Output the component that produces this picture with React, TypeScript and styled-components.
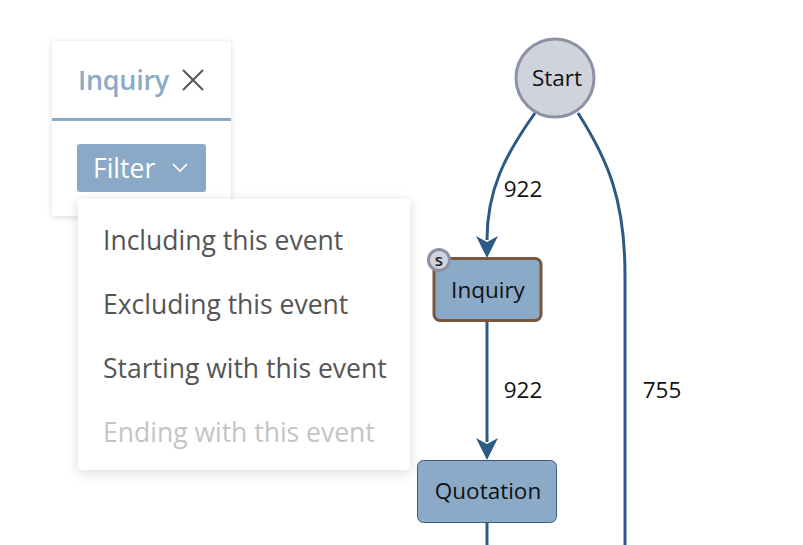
import styled, { createGlobalStyle } from 'styled-components'

const GlobalStyle = createGlobalStyle`
  html, body {
    margin: 0;
    padding: 0;
    background: #fff;
  }
  body {
    font-family: "Open Sans", "Noto Sans", sans-serif;
  }
`

const menuItems = [
  { label: 'Including this event', disabled: false },
  { label: 'Excluding this event', disabled: false },
  { label: 'Starting with this event', disabled: false },
  { label: 'Ending with this event', disabled: true }
]

function ProcessGraph () {
  const edge = '#2c5a85'
  return (
    <GraphSvg width="803" height="545" viewBox="0 0 803 545">
      <g fill="none" stroke={edge} strokeWidth="3">
        <path d="M535 113 C505 155 487 190 487 240" />
        <path d="M487 321 L487 442" />
        <path d="M578 113 C608 160 625 200 625 275 L625 545" />
        <path d="M487 523 L487 545" />
      </g>
      <path d="M476 236 L487 242 L498 236 L487 258 Z" fill={edge} />
      <path d="M476 438 L487 444 L498 438 L487 460 Z" fill={edge} />

      <circle cx="555" cy="78" r="39" fill="#d0d3dc" stroke="#8e90a5" strokeWidth="3" />
      <GraphText x="557" y="86" textAnchor="middle">Start</GraphText>

      <rect x="434" y="258.5" width="107" height="62" rx="6" fill="#8aaac8" stroke="#7a5738" strokeWidth="3" />
      <GraphText x="488" y="298" textAnchor="middle">Inquiry</GraphText>
      <circle cx="439" cy="260" r="10.5" fill="#d0d3dc" stroke="#8e90a5" strokeWidth="3" />
      <BadgeText x="439" y="266" textAnchor="middle">s</BadgeText>

      <rect x="417.5" y="460.5" width="139" height="62" rx="6" fill="#8aaac8" stroke="#3d5a7a" strokeWidth="1" />
      <GraphText x="488" y="499" textAnchor="middle">Quotation</GraphText>

      <GraphText x="523" y="197" textAnchor="middle">922</GraphText>
      <GraphText x="523" y="398" textAnchor="middle">922</GraphText>
      <GraphText x="662" y="398" textAnchor="middle">755</GraphText>
    </GraphSvg>
  )
}

function App () {
  return (
    <Page>
      <GlobalStyle />
      <ProcessGraph />
      <Card>
        <CardHeader>
          <Title>Inquiry</Title>
          <CloseButton aria-label="close">
            <svg width="24" height="24" viewBox="0 0 24 24">
              <path d="M2 2 L22 22 M22 2 L2 22" stroke="#555" strokeWidth="2" fill="none" />
            </svg>
          </CloseButton>
        </CardHeader>
        <CardBody>
          <FilterButton>
            Filter
            <svg width="16" height="10" viewBox="0 0 16 10">
              <path d="M1 1 L8 8 L15 1" stroke="#fff" strokeWidth="1.6" fill="none" />
            </svg>
          </FilterButton>
        </CardBody>
      </Card>
      <Menu>
        {menuItems.map(item => (
          <MenuItem key={item.label} $disabled={item.disabled}>{item.label}</MenuItem>
        ))}
      </Menu>
    </Page>
  )
}

const Page = styled.div`
  position: relative;
  width: 803px;
  height: 545px;
  overflow: hidden;
  background: #fff;
`
const GraphSvg = styled.svg`
  position: absolute;
  left: 0;
  top: 0;
`
const GraphText = styled.text`
  font-family: "Open Sans", "Noto Sans", sans-serif;
  font-size: 22.5px;
  fill: #111;
`
const BadgeText = styled.text`
  font-family: "Open Sans", "Noto Sans", sans-serif;
  font-size: 17px;
  font-weight: 600;
  fill: #222;
`
const Card = styled.div`
  position: absolute;
  left: 52px;
  top: 41px;
  width: 179px;
  height: 175px;
  background: #fff;
  border-radius: 3px;
  box-shadow: 0 1px 6px rgba(0, 0, 0, 0.15);
  display: flex;
  flex-direction: column;
`
const CardHeader = styled.div`
  height: 77px;
  display: flex;
  align-items: center;
  gap: 12px;
  padding: 0 26px;
  border-bottom: 3px solid #8aaac8;
`
const Title = styled.span`
  font-size: 27px;
  color: #8aaac8;
  font-weight: 600;
  letter-spacing: -0.3px;
  white-space: nowrap;
`
const CloseButton = styled.button`
  border: none;
  background: none;
  padding: 0;
  display: flex;
  cursor: pointer;
`
const CardBody = styled.div`
  padding: 23px 25px;
`
const FilterButton = styled.button`
  width: 129px;
  height: 48px;
  border: none;
  border-radius: 3px;
  background: #8aa9c7;
  color: #fff;
  font-family: "Open Sans", "Noto Sans", sans-serif;
  font-size: 26.5px;
  display: flex;
  align-items: center;
  gap: 17px;
  padding: 0 16px;
  cursor: pointer;
`
const Menu = styled.ul`
  position: absolute;
  left: 78px;
  top: 199px;
  width: 332px;
  margin: 0;
  padding: 9px 0 6px;
  list-style: none;
  background: #fff;
  border-radius: 4px;
  box-shadow: 0 3px 14px rgba(0, 0, 0, 0.14);
`
const MenuItem = styled.li<{ $disabled: boolean }>`
  height: 64px;
  display: flex;
  align-items: center;
  padding: 0 25px;
  font-size: 26.5px;
  white-space: nowrap;
  color: ${p => (p.$disabled ? '#c4c4c4' : '#555')};
`

export default App
